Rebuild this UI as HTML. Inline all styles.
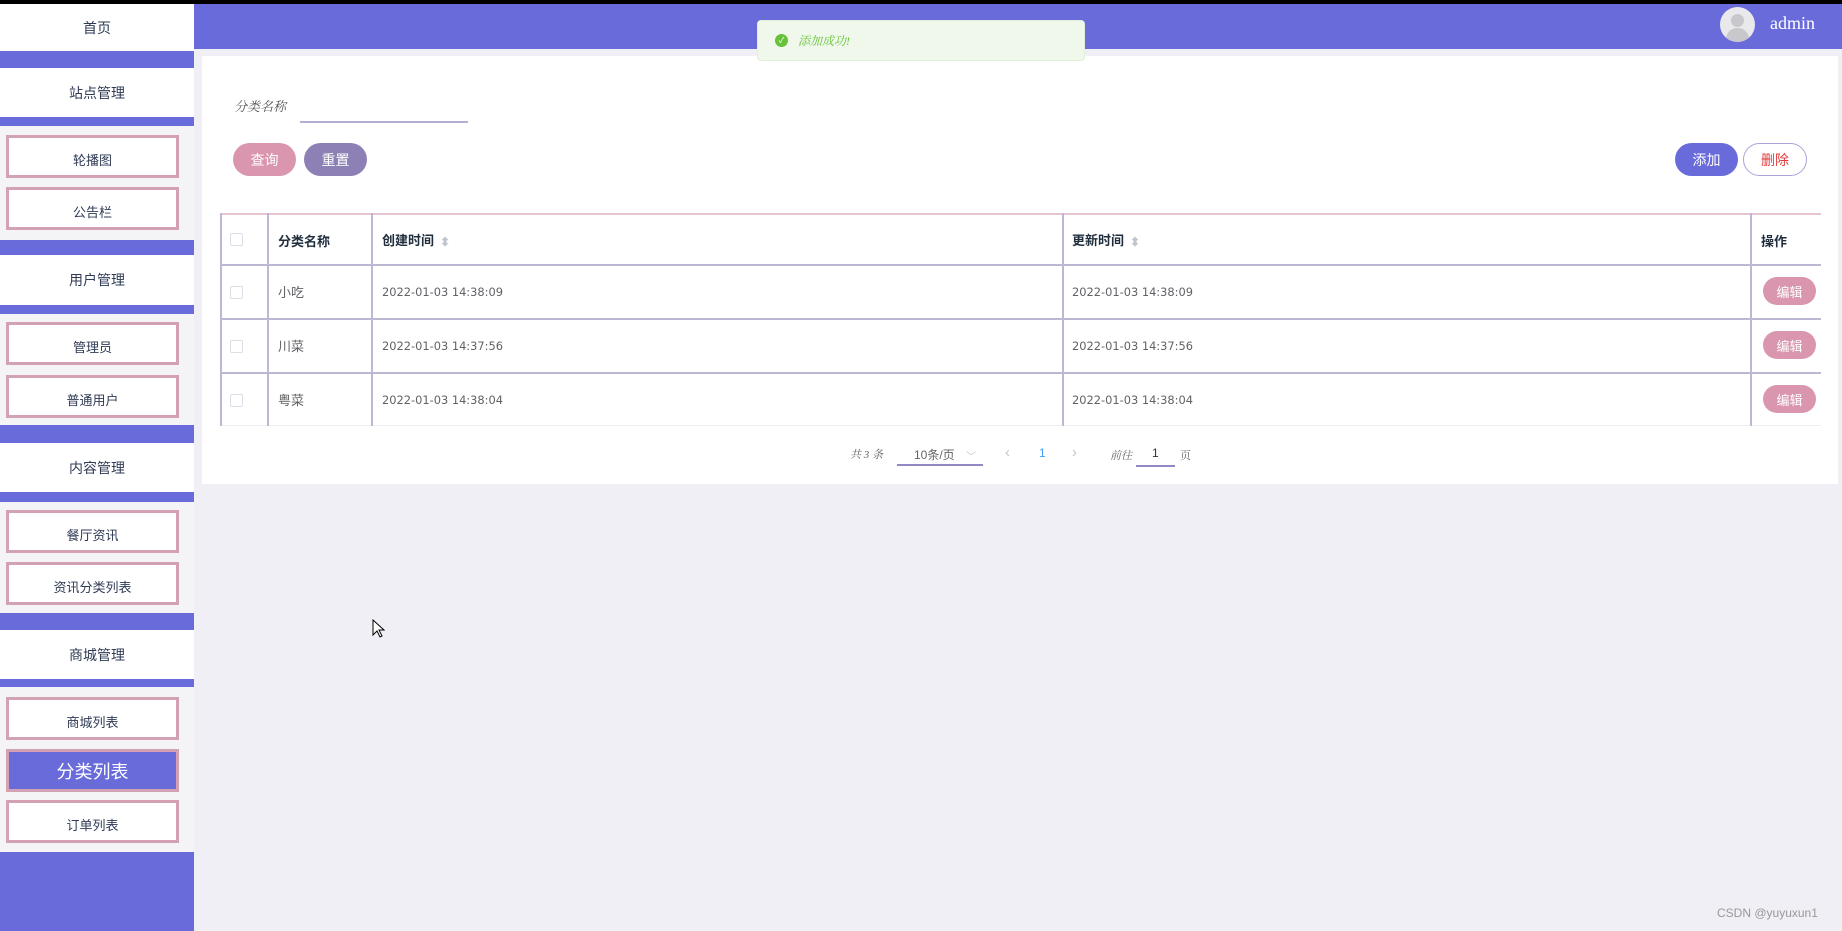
<!DOCTYPE html>
<html><head><meta charset="utf-8"><style>
*{margin:0;padding:0;box-sizing:border-box}
body{width:1842px;height:931px;position:relative;overflow:hidden;background:#efeff5;font-family:"Liberation Sans","Noto Sans CJK SC",sans-serif}
.a{position:absolute}
.pb{position:absolute;left:0;width:194px;background:#6a6bdb}
.wh{position:absolute;left:0;width:194px;background:#fff;color:#2f3a55;font-size:14px;display:flex;align-items:center;justify-content:center}
.bx{position:absolute;left:6px;width:173px;height:43px;border:3px solid #d2a2b4;background:#fff;color:#2f3a55;font-size:13px;display:flex;align-items:center;justify-content:center;padding-top:6px}
.btn{position:absolute;height:33px;border-radius:17px;color:#fff;font-size:14px;display:flex;align-items:center;justify-content:center}
.cell{position:absolute;font-size:13px;color:#606266}
.dt{position:absolute;font-size:11.4px;color:#606266;font-family:"DejaVu Sans",sans-serif}
.hl{position:absolute;height:2px;background:#bdb7d6}
.vl{position:absolute;width:2px;background:#bdb7d6}
.ed{position:absolute;left:1763px;width:53px;height:28px;border-radius:14px;background:#d996ae;color:#fff;font-size:13px;display:flex;align-items:center;justify-content:center}
.cb{position:absolute;left:230px;width:13px;height:13px;border:1px solid #dcdfe6;border-radius:2px;background:#fff}
.srt{display:inline-block;margin-left:6px;color:#c0c4cc;font-size:12px;vertical-align:middle;line-height:1}
</style></head><body>
<div class="a" style="left:0;top:0;width:1842px;height:4px;background:#000"></div>
<div class="a" style="left:194px;top:4px;width:1648px;height:45px;background:#6a6bdb"></div>
<div class="a" style="left:1720px;top:7px;width:35px;height:35px;border-radius:50%;background:#e9e9ec;overflow:hidden"><div class="a" style="left:11px;top:7px;width:13px;height:13px;border-radius:50%;background:#c8c8cc"></div><div class="a" style="left:6px;top:21px;width:23px;height:16px;border-radius:11px 11px 0 0;background:#c8c8cc"></div></div>
<div class="a" style="left:1770px;top:13px;color:#fff;font-family:'Liberation Serif',serif;font-size:18px">admin</div>

<div class="a" style="left:0;top:4px;width:194px;height:927px;background:#f4f3f6"></div>
<div class="wh" style="top:4px;height:47px">首页</div>
<div class="pb" style="top:51px;height:17px"></div>
<div class="wh" style="top:68px;height:49px">站点管理</div>
<div class="pb" style="top:117px;height:9px"></div>
<div class="bx" style="top:135px">轮播图</div>
<div class="bx" style="top:187px">公告栏</div>
<div class="pb" style="top:240px;height:15px"></div>
<div class="wh" style="top:255px;height:50px">用户管理</div>
<div class="pb" style="top:305px;height:9px"></div>
<div class="bx" style="top:322px">管理员</div>
<div class="bx" style="top:375px">普通用户</div>
<div class="pb" style="top:425px;height:18px"></div>
<div class="wh" style="top:443px;height:49px">内容管理</div>
<div class="pb" style="top:492px;height:10px"></div>
<div class="bx" style="top:510px">餐厅资讯</div>
<div class="bx" style="top:562px">资讯分类列表</div>
<div class="pb" style="top:613px;height:17px"></div>
<div class="wh" style="top:630px;height:49px">商城管理</div>
<div class="pb" style="top:679px;height:8px"></div>
<div class="bx" style="top:697px">商城列表</div>
<div class="bx" style="top:749px;background:#6a6bdb;color:#fff;font-size:18px;padding-top:0">分类列表</div>
<div class="bx" style="top:800px">订单列表</div>
<div class="pb" style="top:852px;height:79px"></div>

<div class="a" style="left:202px;top:56px;width:1636px;height:428px;background:#fff"></div>
<div class="a" style="left:234px;top:96px;font-size:13px;color:#555;font-family:'Liberation Serif','Noto Serif CJK SC',serif;font-style:italic">分类名称</div>
<div class="a" style="left:300px;top:121px;width:168px;height:2px;background:#b2acd6"></div>
<div class="btn" style="left:233px;top:143px;width:63px;background:#d996ae">查询</div>
<div class="btn" style="left:304px;top:143px;width:63px;background:#8c80b4">重置</div>
<div class="btn" style="left:1675px;top:143px;width:63px;background:#6a6bdb">添加</div>
<div class="btn" style="left:1743px;top:143px;width:64px;background:#fff;border:1.5px solid #a9a3d8;color:#e23a3a">删除</div>

<div class="a" style="left:220px;top:213px;width:1601px;height:2px;background:#e6c4d0"></div>
<div class="hl" style="left:220px;top:264px;width:1601px"></div>
<div class="hl" style="left:220px;top:318px;width:1601px"></div>
<div class="hl" style="left:220px;top:372px;width:1601px"></div>
<div class="a" style="left:220px;top:425px;width:1601px;height:1px;background:#eee"></div>
<div class="vl" style="left:220px;top:213px;height:213px"></div>
<div class="vl" style="left:267px;top:213px;height:213px"></div>
<div class="vl" style="left:371px;top:213px;height:213px"></div>
<div class="vl" style="left:1062px;top:213px;height:213px"></div>
<div class="vl" style="left:1750px;top:213px;height:213px"></div>
<div class="cb" style="top:233px"></div>
<div class="cb" style="top:286px"></div>
<div class="cb" style="top:340px"></div>
<div class="cb" style="top:394px"></div>
<div class="cell" style="left:278px;top:231px;color:#1f2d3d;font-weight:bold">分类名称</div>
<div class="cell" style="left:382px;top:230px;color:#1f2d3d;font-weight:bold">创建时间<span class="srt">⬍</span></div>
<div class="cell" style="left:1072px;top:230px;color:#1f2d3d;font-weight:bold">更新时间<span class="srt">⬍</span></div>
<div class="cell" style="left:1761px;top:231px;color:#1f2d3d;font-weight:bold">操作</div>
<div class="cell" style="left:278px;top:282px">小吃</div>
<div class="dt" style="left:382px;top:285px">2022-01-03 14:38:09</div>
<div class="dt" style="left:1072px;top:285px">2022-01-03 14:38:09</div>
<div class="ed" style="top:277px">编辑</div>
<div class="cell" style="left:278px;top:336px">川菜</div>
<div class="dt" style="left:382px;top:339px">2022-01-03 14:37:56</div>
<div class="dt" style="left:1072px;top:339px">2022-01-03 14:37:56</div>
<div class="ed" style="top:331px">编辑</div>
<div class="cell" style="left:278px;top:390px">粤菜</div>
<div class="dt" style="left:382px;top:393px">2022-01-03 14:38:04</div>
<div class="dt" style="left:1072px;top:393px">2022-01-03 14:38:04</div>
<div class="ed" style="top:385px">编辑</div>

<div class="a" style="left:850px;top:446px;font-size:11px;color:#666;font-family:'Liberation Serif','Noto Serif CJK SC',serif;font-style:italic">共 3 条</div>
<div class="a" style="left:914px;top:446px;font-size:12px;color:#606266">10条/页</div>
<div class="a" style="left:966px;top:448px;font-size:10px;color:#c0c4cc">﹀</div>
<div class="a" style="left:897px;top:464px;width:86px;height:2px;background:#8f88c4"></div>
<div class="a" style="left:1005px;top:444px;font-size:15px;color:#c0c4cc">‹</div>
<div class="a" style="left:1039px;top:446px;font-size:12px;color:#409eff">1</div>
<div class="a" style="left:1072px;top:444px;font-size:15px;color:#c0c4cc">›</div>
<div class="a" style="left:1110px;top:447px;font-size:11px;color:#666;font-family:'Liberation Serif','Noto Serif CJK SC',serif;font-style:italic">前往</div>
<div class="a" style="left:1152px;top:446px;font-size:12px;color:#333">1</div>
<div class="a" style="left:1136px;top:465px;width:39px;height:2px;background:#8f88c4"></div>
<div class="a" style="left:1180px;top:447px;font-size:11px;color:#666;font-family:'Liberation Serif','Noto Serif CJK SC',serif">页</div>

<div class="a" style="left:757px;top:20px;width:328px;height:41px;background:#eff8ea;border:1px solid #e1efd8;border-radius:4px"></div>
<div class="a" style="left:775px;top:34px;width:13px;height:13px;border-radius:50%;background:#67c23a;color:#fff;font-size:8px;text-align:center;line-height:13px">✓</div>
<div class="a" style="left:798px;top:32px;font-size:12px;color:#67c23a;font-family:'Liberation Serif','Noto Serif CJK SC',serif;font-style:italic">添加成功!</div>

<svg class="a" style="left:372px;top:619px" width="14" height="20" viewBox="0 0 14 20"><path d="M1 1 L1 16 L5 12 L8 18 L10 17 L7 11 L12 11 Z" fill="#fff" stroke="#000" stroke-width="1"/></svg>
<div class="a" style="left:1717px;top:906px;font-size:12px;color:#999">CSDN @yuyuxun1</div>
</body></html>
